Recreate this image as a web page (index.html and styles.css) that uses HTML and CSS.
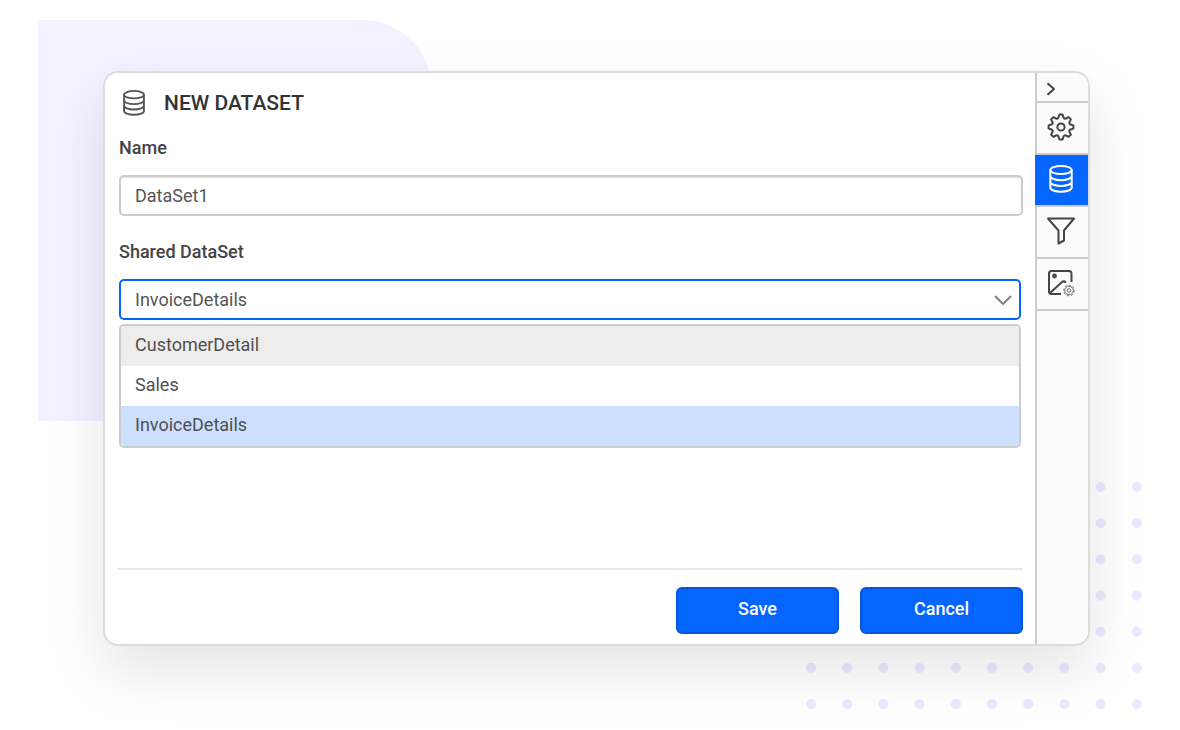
FILE: index.html
```html
<!DOCTYPE html>
<html lang="en">
<head>
    <meta charset="UTF-8">
    <meta name="viewport" content="width=device-width, initial-scale=1.0">
    <title>New Dataset</title>
    <link rel="stylesheet" href="styles.css">
</head>
<body>
<!-- Background decoration -->
<div class="backdrop"></div>
<svg class="dots" viewBox="0 0 336 228" aria-hidden="true">
    <defs>
        <pattern id="dot" width="36.2" height="36.2" patternUnits="userSpaceOnUse">
            <circle cx="5" cy="5" r="5" fill="#ebe8ff"/>
        </pattern>
    </defs>
    <rect width="336" height="228" fill="url(#dot)"/>
</svg>

<div class="card">
    <main class="panel">
        <header class="panel-header">
            <svg class="icon-db" viewBox="0 0 24 28" aria-hidden="true">
                <ellipse cx="12" cy="5" rx="10.7" ry="4"/>
                <path d="M1.3 5v17.5c0 2.4 4.8 4.2 10.7 4.2s10.7-1.800 10.700-4.200V5M1.300 11c0 2.400 4.800 4.200 10.700 4.200s10.700-1.800 10.700-4.200M1.300 16.800c0 2.400 4.800 4.200 10.700 4.200s10.700-1.800 10.700-4.200"/>
            </svg>
            <h1>NEW DATASET</h1>
        </header>

        <form class="form" id="dataset-form">
            <label for="name">Name</label>
            <input class="field" id="name" type="text" value="DataSet1">

            <label for="shared">Shared DataSet</label>
            <div class="combo">
                <select class="field field-active" id="shared">
                    <option>CustomerDetail</option>
                    <option>Sales</option>
                    <option selected>InvoiceDetails</option>
                </select>
                <svg class="arrow" viewBox="0 0 18 10" aria-hidden="true">
                    <path d="M1 1l8 8 8-8"/>
                </svg>
                <ul class="options" role="listbox" aria-label="Shared DataSet">
                    <li class="hovered" role="option" aria-selected="false">CustomerDetail</li>
                    <li role="option" aria-selected="false">Sales</li>
                    <li class="selected" role="option" aria-selected="true">InvoiceDetails</li>
                </ul>
            </div>
        </form>

        <footer class="actions">
            <button class="btn" type="submit" form="dataset-form">Save</button>
            <button class="btn" type="button">Cancel</button>
        </footer>
    </main>

    <nav class="toolbar" aria-label="Panels">
        <button class="tool tool-collapse" type="button" aria-label="Collapse">
            <svg width="10" height="14" viewBox="0 0 10 14"><path d="M1.500 1.200L8 7l-6.500 5.800"/></svg>
        </button>
        <button class="tool" type="button" aria-label="Properties">
            <svg width="28" height="28" viewBox="0 0 28 28">
                <path d="M11.500 4.500L12.400 1.600H15.600L16.500 4.500Q17.300 6.100 18.900 5.500L21.600 4.100L23.900 6.400L22.500 9.100Q21.900 10.700 23.500 11.500L26.400 12.400V15.600L23.500 16.500Q21.900 17.300 22.500 18.900L23.900 21.600L21.600 23.900L18.900 22.500Q17.300 21.900 16.500 23.500L15.600 26.400H12.400L11.500 23.500Q10.700 21.900 9.100 22.500L6.400 23.900L4.100 21.600L5.500 18.900Q6.100 17.300 4.500 16.500L1.600 15.600V12.400L4.500 11.500Q6.100 10.700 5.500 9.100L4.100 6.400L6.400 4.100L9.100 5.500Q10.700 6.100 11.500 4.500Z"/>
                <circle cx="14" cy="14" r="3.600"/>
            </svg>
        </button>
        <button class="tool tool-active" type="button" aria-label="Data">
            <svg width="24" height="28" viewBox="0 0 24 28">
                <ellipse cx="12" cy="5" rx="10.700" ry="4"/>
                <path d="M1.300 5v17.500c0 2.400 4.800 4.200 10.700 4.200s10.700-1.800 10.700-4.200V5M1.300 11c0 2.400 4.800 4.200 10.700 4.200s10.700-1.800 10.700-4.200M1.300 16.800c0 2.400 4.800 4.200 10.700 4.200s10.700-1.800 10.700-4.200"/>
            </svg>
        </button>
        <button class="tool" type="button" aria-label="Filter">
            <svg width="30" height="30" viewBox="0 0 30 30">
                <path d="M2 2.500h26L18 14.500v10L12.500 27.500v-13Z"/>
            </svg>
        </button>
        <button class="tool" type="button" aria-label="Image settings">
            <svg width="28" height="28" viewBox="0 0 28 28">
                <path d="M14 25H4.500Q2 25 2 22.500V4.500Q2 2 4.500 2H22Q24.500 2 24.500 4.500V13M2.500 24.500L15 13Q17 11.500 19 13.500"/>
                <circle cx="7.500" cy="7" r="1.400"/>
                <circle class="thin" cx="22" cy="21.500" r="4.300"/>
                <circle class="teeth" cx="22" cy="21.500" r="5.300"/>
                <circle class="thin" cx="22" cy="21.500" r="1.800"/>
            </svg>
        </button>
    </nav>
</div>
</body>
</html>
```
FILE: styles.css
```css
* {
    box-sizing: border-box;
}

body {
    position: relative;
    display: flex;
    min-height: 100vh;
    margin: 0;
    padding: 71px 90px 84px 103px;
    overflow: hidden;
    background: #ffffff;
    color: #444444;
    font-family: Roboto, Arial, sans-serif;
    font-size: 18px;
}

/* Decoration behind the card */
.backdrop {
    position: absolute;
    top: 20px;
    left: 38px;
    width: 394px;
    height: 401px;
    border-top-right-radius: 70px;
    background: #f3f2ff;
}

.dots {
    position: absolute;
    right: 38px;
    bottom: 20px;
    width: 336px;
}

/* Card */
.card {
    position: relative;
    display: flex;
    flex: 1;
    overflow: hidden;
    border: 2px solid #dcdcde;
    border-radius: 15px;
    background: #ffffff;
    box-shadow: 0 24px 60px rgba(0, 0, 0, 0.11);
}

.panel {
    display: flex;
    flex: 1;
    flex-direction: column;
    padding: 0 12px 10px;
}

.panel-header {
    display: flex;
    align-items: center;
    gap: 18px;
    height: 60px;
    padding-left: 5px;
}

.panel-header h1 {
    margin: 0;
    color: #333333;
    font-size: 21px;
    font-weight: 500;
}

.icon-db {
    width: 24px;
    height: 26px;
    fill: none;
    stroke: #555555;
    stroke-width: 2;
}

/* Form */
.form {
    display: flex;
    flex-direction: column;
    padding-left: 2px;
}

.form label {
    margin-bottom: 12px;
    font-weight: 500;
    line-height: 30px;
}

.field {
    width: 100%;
    height: 41px;
    padding: 0 14px;
    border: 2px solid #cccccc;
    border-radius: 5px;
    background: #ffffff;
    color: #555555;
    font: inherit;
    outline: none;
    appearance: none;
}

input.field {
    margin-bottom: 21px;
    box-shadow: inset 0 1px 1px #dddddd;
}

.field-active {
    border-color: #0565ff;
}

.combo {
    position: relative;
    margin-right: 2px;
}

.arrow {
    position: absolute;
    top: 16px;
    right: 9px;
    width: 18px;
    fill: none;
    stroke: #808080;
    stroke-width: 2;
    pointer-events: none;
}

.options {
    position: absolute;
    top: 45px;
    left: 0;
    width: 100%;
    margin: 0;
    padding: 0;
    overflow: hidden;
    border: 2px solid #cccccc;
    border-radius: 5px;
    background: #ffffff;
    color: #505050;
    list-style: none;
}

.options li {
    padding: 0 14px 2px;
    line-height: 38px;
}

.options .hovered {
    background: #ededed;
}

.options .selected {
    background: #ccdfff;
}

/* Footer buttons */
.actions {
    display: flex;
    justify-content: flex-end;
    gap: 21px;
    margin-top: auto;
    padding-top: 17px;
    border-top: 2px solid #e8e8e8;
}

.btn {
    width: 163px;
    height: 47px;
    padding: 0 0 5px;
    border: 2px solid #0756d3;
    border-radius: 6px;
    background: #0565ff;
    color: #ffffff;
    font: inherit;
    font-weight: 500;
    cursor: pointer;
}

/* Right toolbar */
.toolbar {
    display: flex;
    flex-direction: column;
    width: 53px;
    border-left: 2px solid #cccccc;
    background: #fbfbfb;
}

.tool {
    display: flex;
    align-items: center;
    justify-content: center;
    height: 52px;
    padding: 0 3px 2px 0;
    border: 0;
    border-bottom: 2px solid #cccccc;
    background: none;
    cursor: pointer;
}

.tool svg {
    fill: none;
    stroke: #444444;
    stroke-width: 2;
    stroke-linejoin: round;
}

.tool-collapse {
    height: 30px;
    padding: 4px 24px 0 0;
}

.tool-active {
    margin-left: -2px;
    padding-right: 1px;
    background: #0565ff;
}

.tool-active svg {
    stroke: #ffffff;
}

.tool svg .thin {
    stroke: #666666;
    stroke-width: 1;
}

.tool svg .teeth {
    stroke: #666666;
    stroke-width: 1;
    stroke-dasharray: 2 2;
}
```
